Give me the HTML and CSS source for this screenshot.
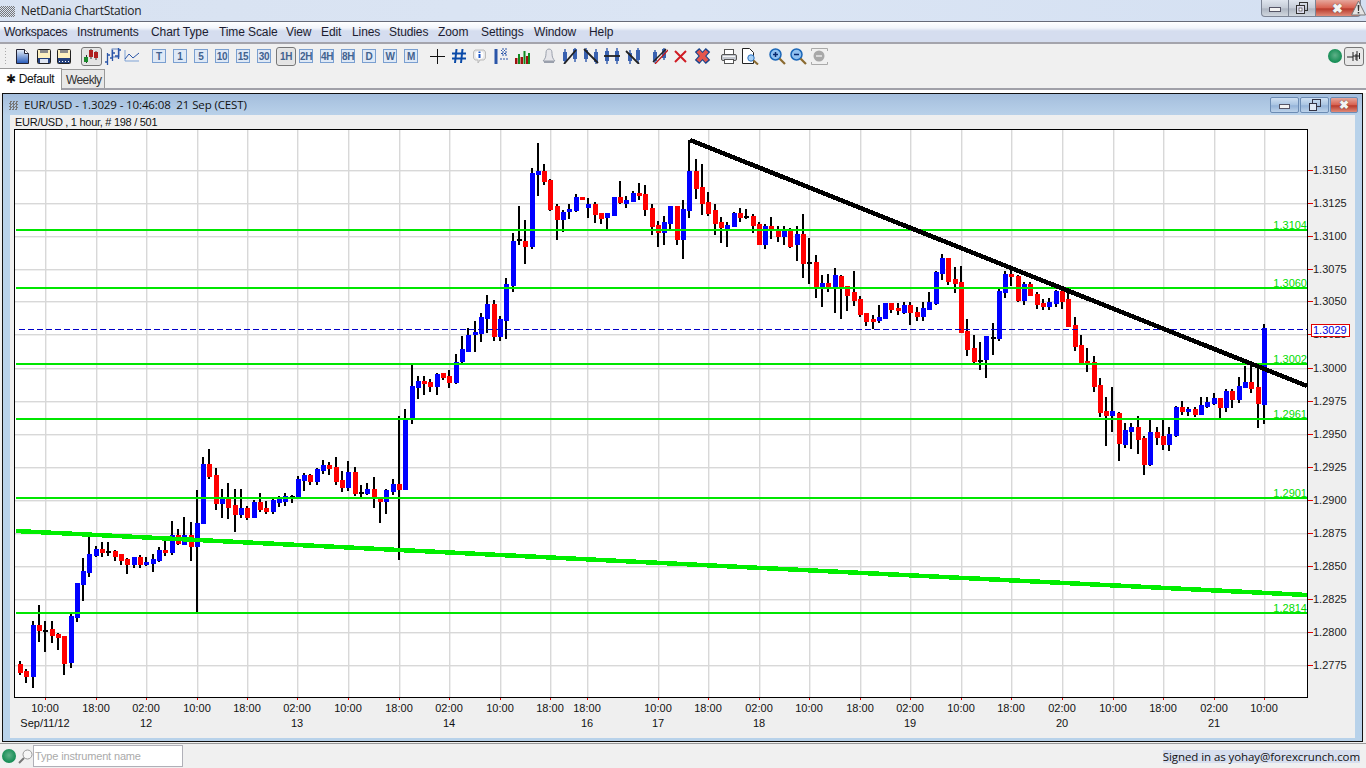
FILE: index.html
```html
<!DOCTYPE html>
<html lang="en">
<head>
<meta charset="utf-8">
<title>NetDania ChartStation</title>
<link rel="stylesheet" href="styles.css">
</head>
<body>
<div class="app">
  <header class="titlebar">
    <span class="dots"></span>
    <span class="apptitle">NetDania ChartStation</span>
    <div class="wincontrols">
      <span class="wc wc-min"><i></i></span>
      <span class="wc wc-max"><svg width="12" height="12" viewBox="0 0 12 12"><rect x="3.5" y=".5" width="8" height="8" fill="none" stroke="#333"/><rect x=".5" y="3.5" width="8" height="8" fill="#dde" stroke="#333"/><rect x="3" y="6" width="3" height="3" fill="#fff" stroke="#333" stroke-width=".6"/></svg></span>
      <span class="wc wc-close"><b>✖</b></span>
      <svg class="warn" width="15" height="16" viewBox="0 0 15 16"><path d="M7.5 1 14.5 15H.5z" fill="#e4e4e4" stroke="#777"/><path d="M6.6 5h1.8l-.4 6h-1zM6.7 12h1.6v1.6H6.7z" fill="#333"/></svg>
    </div>
  </header>
  <nav class="menubar">
    <span>Workspaces</span><span>Instruments</span><span>Chart Type</span><span>Time Scale</span><span>View</span><span>Edit</span><span>Lines</span><span>Studies</span><span>Zoom</span><span>Settings</span><span>Window</span><span>Help</span>
  </nav>
  <div class="toolbar">
    <span class="grip"></span>
    <svg class="ic i-new" width="13" height="15" viewBox="0 0 13 15"><defs><linearGradient id="gd" x1="0" y1="0" x2="0" y2="1"><stop offset="0" stop-color="#eaf2fb"/><stop offset="1" stop-color="#2458b8"/></linearGradient></defs><path d="M.5.5h8l4 4v10H.5z" fill="url(#gd)" stroke="#223"/><path d="M8.5.5v4h4" fill="#fff" stroke="#223"/></svg>
    <svg class="ic i-save" width="14" height="15" viewBox="0 0 14 15"><rect x=".5" y=".5" width="13" height="14" rx="1" fill="#fdf0c0" stroke="#222"/><rect x="3" y="1" width="8" height="3" fill="#8a8a8a"/><rect x="1" y="9" width="12" height="5" fill="#23407e"/><rect x="3" y="10" width="8" height="4" fill="#dfe6f2"/></svg>
    <svg class="ic i-saveas" width="14" height="15" viewBox="0 0 14 15"><rect x=".5" y=".5" width="13" height="14" rx="1" fill="#fdf0c0" stroke="#222"/><rect x="3" y="1" width="8" height="3" fill="#8a8a8a"/><rect x="1" y="9" width="12" height="5" fill="#23407e"/><path d="M2 12.5h1M5 12.5h1M8 12.5h1M11 12.5h1" stroke="#fff"/></svg>
    <span class="sel sel-chart"><svg width="18" height="15" viewBox="0 0 18 15"><path d="M3.5 6v8M8 0v10M13 2v9" stroke="#333"/><rect x="1" y="8" width="4" height="5" fill="#1a8a2a"/><rect x="6" y="1" width="4" height="7" fill="#b02020"/><rect x="11" y="3" width="4" height="6" fill="#b02020"/></svg></span>
    <svg class="ic i-bars" width="18" height="18" viewBox="0 0 18 18"><path d="M3.5 6v12M1 15h2.500M3.500 8H6M8.500 3v11M6 11h2.500M8.500 6H11M14.500 1v11M11 9h3.500M14.500 3H17" fill="none" stroke="#2a55a8" stroke-width="1.300"/><rect x="8" y="2" width="7" height="8" fill="none" stroke="#2a55a8" stroke-width=".7"/></svg>
    <svg class="ic i-line" width="16" height="14" viewBox="0 0 16 14"><path d="M1 12V1M1 12h14" stroke="#7fa3d6" fill="none"/><path d="M1 10 5 5l4 4 6-5" fill="none" stroke="#2a55a8"/></svg>
    <span class="tf t1">T</span><span class="tf">1</span><span class="tf">5</span><span class="tf">10</span><span class="tf">15</span><span class="tf">30</span><span class="sel sel-tf"><span class="tf tf-on">1H</span></span><span class="tf t2h">2H</span><span class="tf">4H</span><span class="tf">8H</span><span class="tf">D</span><span class="tf">W</span><span class="tf">M</span>
    <svg class="ic i-cross" width="15" height="15" viewBox="0 0 15 15"><path d="M7.500 0v15M0 7.500h15" stroke="#111"/></svg>
    <svg class="ic i-hash" width="16" height="16" viewBox="0 0 16 16"><path d="M5.500 1 4 15M11.500 1 10 15M1 5.500h14M1 10.500h14" stroke="#0a4aa8" stroke-width="2" fill="none"/></svg>
    <svg class="ic i-info" width="13" height="15" viewBox="0 0 13 15"><path d="M2 1h9l1.500 2v6L11 11H7l-2 3v-3H2L.5 9V3z" fill="#e8e8e8" stroke="#bbb"/><circle cx="6.500" cy="6" r="4" fill="#fff"/><path d="M5.500 2.500h2v1.500h-2zM5.500 5h2v4h-2z" fill="#1a55c8"/></svg>
    <svg class="ic i-level" width="16" height="16" viewBox="0 0 16 16"><path d="M3 1v15" stroke="#2a55a8" stroke-width="3"/><path d="M8 2.500h1m2 0h1M8 5.500h6M10 0v8M13 0v8M7 11h9" stroke="#2a55a8" stroke-dasharray="2 1" fill="none"/></svg>
    <svg class="ic i-vol" width="16" height="16" viewBox="0 0 16 16"><path d="M1 10h2.500v6H1z" fill="#a01010"/><path d="M4 6h2v10H4z" fill="#118a20"/><path d="M6.500 9H9v7H6.500z" fill="#a01010"/><path d="M9.500 3h2v13h-2z" fill="#118a20"/><path d="M12 8h2v8h-2z" fill="#a01010"/><path d="M14 5h2v11h-2z" fill="#118a20"/></svg>
    <svg class="ic i-bell" width="14" height="16" viewBox="0 0 14 16"><path d="M7 1C4.500 1 4 3 4 5.500 4 9 3 11 1 13h12c-2-2-3-4-3-7.500C10 3 9.500 1 7 1z" fill="#e6e6ea" stroke="#9aa0ac"/><path d="M2 14h10" stroke="#9aa0ac" stroke-width="2"/></svg>
    <svg class="ic i-tool" width="16" height="16" viewBox="0 0 16 16"><path d="M1 4h4v9H1zM11 1h4v10h-4z" fill="#3a62b0"/><path d="M3 1v14M13 0v14" stroke="#3a62b0" stroke-width="1.500"/><path d="M2 16 14 2" stroke="#222" stroke-width="1.800"/></svg>
    <svg class="ic i-tool2" width="16" height="16" viewBox="0 0 16 16"><path d="M1 2h4v9H1zM11 4h4v10h-4z" fill="#3a62b0"/><path d="M3 0v14M13 1v15" stroke="#3a62b0" stroke-width="1.500"/><path d="M1 1l14 14" stroke="#222" stroke-width="1.800"/></svg>
    <svg class="ic i-tool2" width="16" height="16" viewBox="0 0 16 16"><path d="M1 3h4v10H1zM11 3h4v10h-4z" fill="#3a62b0"/><path d="M3 0v16M13 0v16" stroke="#3a62b0" stroke-width="1.500"/><path d="M0 8h16" stroke="#222" stroke-width="1.800"/></svg>
    <svg class="ic i-tool2" width="16" height="16" viewBox="0 0 16 16"><path d="M3 5h4v8H3zM11 2h4v10h-4z" fill="#3a62b0"/><path d="M5 2v14M13 0v15" stroke="#3a62b0" stroke-width="1.500"/><path d="M1 3l13 13" stroke="#222" stroke-width="1.800"/></svg>
    <svg class="ic i-del1" width="16" height="16" viewBox="0 0 16 16"><path d="M1 4h4v9H1zM10 1h4v9h-4z" fill="#3a62b0"/><path d="M3 2v13M12 0v12" stroke="#3a62b0" stroke-width="1.500"/><path d="M1 14 14 1" stroke="#222" stroke-width="1.500"/><path d="M3 16 16 2" stroke="#c01818" stroke-width="1.300"/></svg>
    <svg class="ic i-x" width="13" height="13" viewBox="0 0 13 13"><path d="M1 1l11 11M12 1 1 12" stroke="#d01c24" stroke-width="2"/></svg>
    <svg class="ic i-xx" width="17" height="16" viewBox="0 0 17 16"><path d="M3 2l11 12M14 2 3 14" stroke="#17438c" stroke-width="6"/><path d="M4 3l9 10M13 3 4 13" stroke="#e4564c" stroke-width="4"/></svg>
    <svg class="ic i-print" width="16" height="15" viewBox="0 0 16 15"><rect x="3.500" y=".5" width="9" height="5" fill="#fff" stroke="#555"/><rect x=".5" y="5.500" width="15" height="6" rx="1.500" fill="#c4c8d0" stroke="#555"/><rect x="3.500" y="10.500" width="9" height="4" fill="#fff" stroke="#555"/><path d="M2 7.500h12" stroke="#f4f4f4"/></svg>
    <svg class="ic i-prev" width="17" height="17" viewBox="0 0 17 17"><path d="M.5.5h7l4 4v11H.5z" fill="#fff" stroke="#222"/><circle cx="9" cy="10" r="3.200" fill="#a8d0f4" stroke="#2a70c0"/><path d="M11.500 12.500 16 16.500" stroke="#8a6a30" stroke-width="2"/></svg>
    <svg class="ic i-zoom" width="17" height="17" viewBox="0 0 17 17"><circle cx="6.500" cy="6.500" r="5.500" fill="#8fc0f0" stroke="#1a66b8" stroke-width="1.500"/><path d="M4 6.500h5M6.500 4v5" stroke="#0a2a70" stroke-width="1.500"/><path d="M10.500 10.500 16 16" stroke="#8a6a30" stroke-width="2.200"/></svg>
    <svg class="ic i-zoom2" width="17" height="17" viewBox="0 0 17 17"><circle cx="6.500" cy="6.500" r="5.500" fill="#8fc0f0" stroke="#1a66b8" stroke-width="1.500"/><path d="M4 6.500h5" stroke="#0a2a70" stroke-width="1.500"/><path d="M10.500 10.500 16 16" stroke="#8a6a30" stroke-width="2.200"/></svg>
    <svg class="ic i-zoom2" width="17" height="17" viewBox="0 0 17 17"><path d="M.5 3V.5h16V3M.5 14v2.500h16V14" fill="none" stroke="#aaa"/><circle cx="8" cy="8" r="5.500" fill="#a8a8a8"/><path d="M5 8h6" stroke="#e8e8e8" stroke-width="1.500"/></svg>
    <span class="tb-right">
      <span class="led"></span>
      <span class="pinbtn"><svg width="14" height="12" viewBox="0 0 14 12"><path d="M0 7h6M6 2v9M10 1v10M12.500 3v6M6 6h7M9 4v6" stroke="#222" fill="none"/></svg></span>
    </span>
  </div>
  <div class="tabs">
    <span class="tab tab-on">✱ Default</span>
    <span class="tab">Weekly</span>
  </div>
  <main class="desk">
    <section class="chartwin">
      <div class="cw-title">
        <span class="dots dots-s"></span>
        <span class="cw-text">EUR/USD - 1.3029 - 10:46:08  21 Sep (CEST)</span>
        <div class="cw-ctrl">
          <span class="cb"><i></i></span>
          <span class="cb"><svg width="12" height="12" viewBox="0 0 12 12"><rect x="3.500" y=".5" width="8" height="7" fill="none" stroke="#334"/><rect x=".5" y="4.500" width="7" height="7" fill="#dfe8f4" stroke="#334"/></svg></span>
          <span class="cb cb-close"><b>✖</b></span>
        </div>
      </div>
      <div class="cw-body" id="chart"></div>
    </section>
  </main>
  <footer class="status">
    <span class="led led-s"></span>
    <svg class="mag" width="15" height="15" viewBox="0 0 15 15"><circle cx="9.500" cy="5.500" r="4.500" fill="#f6f6f6" stroke="#999"/><path d="M6 9 1 14" stroke="#777" stroke-width="2"/></svg>
    <span class="search">Type instrument name</span>
    <span class="signed">Signed in as yohay@forexcrunch.com</span>
  </footer>
</div>
<script src="chart.js"></script>
</body>
</html>
```
FILE: styles.css
```css
* { box-sizing: border-box; }
html, body { margin: 0; padding: 0; }
body { width: 1366px; height: 768px; overflow: hidden; background: #f0f0f0; font-family: "Liberation Sans", Arial, sans-serif; color: #111; }
.app { display: flex; flex-direction: column; width: 1366px; height: 768px; }

.titlebar { height: 21px; flex: none; display: flex; align-items: center; background: linear-gradient(90deg, #d8e2f1, #dbe5f4 50%, #d4e0f2); position: relative; }
.dots { width: 15px; height: 11px; margin-top: 2px; flex: none; background: repeating-conic-gradient(#777 0 25%, transparent 0 50%) 0 0 / 2px 2px; }
.apptitle { margin-left: 6px; font-family: "Open Sans", sans-serif; font-size: 12px; letter-spacing: -.26px; color: #222; }
.wincontrols { position: absolute; right: 0; top: 0; display: flex; padding-right: 5px; }
.wc { height: 17px; display: flex; align-items: center; justify-content: center; border: 1px solid #7c8494; border-top: 0; background: linear-gradient(#dfe5ee, #c4cbd6 50%, #aeb6c2 55%, #d0d6de); }
.wc-min { width: 28px; border-radius: 0 0 0 4px; }
.wc-min i { width: 12px; height: 5px; background: #f2f2f2; border: 1px solid #556; margin-top: 2px; }
.wc-max { width: 27px; border-left: 0; }
.wc-close { width: 45px; border-left: 0; border-radius: 0 0 4px 0; background: linear-gradient(#e6a79c, #d8604f 50%, #b83a2c 55%, #e08a78); color: #f4f4f4; justify-content: flex-start; padding-left: 16px; }
.wc-close b { font-size: 13px; line-height: 1; text-shadow: 0 0 1px #333; }
.warn { position: absolute; right: 0; top: 0; }

.menubar { height: 23px; flex: none; display: flex; align-items: center; padding-left: 4px; font-size: 12px; letter-spacing: -.1px; color: #1c1c30; border-top: 1px solid #666a78; border-bottom: 2px solid #a4a4ac; background: linear-gradient(#fff, #f2f5fb 30%, #d5ddef 45%, #d5ddef); }
.menubar span { flex: none; white-space: nowrap; }
.menubar span:nth-child(1) { width: 73px; letter-spacing: -.25px; }
.menubar span:nth-child(2) { width: 74px; }
.menubar span:nth-child(3) { width: 68px; }
.menubar span:nth-child(4) { width: 67px; }
.menubar span:nth-child(5) { width: 35px; }
.menubar span:nth-child(6) { width: 31px; }
.menubar span:nth-child(7) { width: 37px; }
.menubar span:nth-child(8) { width: 49px; }
.menubar span:nth-child(9) { width: 43px; }
.menubar span:nth-child(10) { width: 53px; }
.menubar span:nth-child(11) { width: 55px; }

.toolbar { height: 24px; flex: none; display: flex; align-items: center; position: relative; background: #f0f0f0; }
.grip { width: 3px; height: 18px; margin-left: 4px; background-image: radial-gradient(circle, #aaa 0 .7px, transparent .9px); background-size: 3px 3px; }
.ic { flex: none; }
.i-new { margin-left: 9px; }
.i-save { margin-left: 8px; }
.i-saveas { margin-left: 6px; }
.sel { display: flex; align-items: center; justify-content: center; border: 1px solid #777; border-radius: 3px; background: #e4e4e4; box-shadow: inset 0 0 1px #fff; }
.sel-chart { width: 21px; height: 19px; margin-left: 10px; }
.i-bars { margin-left: 2px; }
.i-line { margin-left: 2px; }
.tf { flex: none; width: 14px; height: 14px; display: flex; align-items: center; justify-content: center; margin-left: 7px; border: 1px solid #7a9fd0; background: #dfe9f6; color: #42628f; font-size: 10px; font-weight: bold; letter-spacing: -.3px; }
.t1 { margin-left: 12px; }
.sel-tf { width: 20px; height: 19px; margin-left: 5px; }
.tf-on { margin: 0; border: 0; background: transparent; width: 18px; }
.t2h { margin-left: 3px; }
.i-cross { margin-left: 12px; }
.i-hash { margin-left: 6px; }
.i-info { margin-left: 6px; }
.i-level { margin-left: 7px; }
.i-vol { margin-left: 5px; }
.i-bell { margin-left: 12px; }
.i-tool { margin-left: 6px; }
.i-tool2 { margin-left: 5px; }
.i-del1 { margin-left: 11px; }
.i-x { margin-left: 6px; }
.i-xx { margin-left: 7px; }
.i-print { margin-left: 10px; }
.i-prev { margin-left: 5px; }
.i-zoom { margin-left: 10px; }
.i-zoom2 { margin-left: 4px; }
.tb-right { margin-left: auto; display: flex; align-items: center; gap: 2px; margin-right: 2px; }
.led { display: block; width: 14px; height: 14px; border-radius: 50%; background: radial-gradient(circle at 50% 45%, #5fb088, #0e8a50 75%, #0b7a44); }
.pinbtn { width: 20px; height: 19px; display: flex; align-items: center; justify-content: center; border: 1px solid #777; border-radius: 3px; background: #e8e8e8; }

.tabs { height: 22px; flex: none; display: flex; align-items: flex-end; padding-top: 1px; border-bottom: 2px solid #a0a0a8; font-size: 12px; }
.tab { height: 19px; padding: 3px 4px 0; margin-left: 0; width: 43px; background: #e8e8e8; border: 1px solid #999; border-left: 0; border-bottom: 0; color: #333; letter-spacing: -.6px; white-space: nowrap; }
.tab-on { height: 22px; width: 62px; margin-bottom: -2px; padding: 3px 0 0 6px; background: #fff; color: #111; border-left: 0; letter-spacing: -.35px; }

.desk { height: 653px; flex: none; padding: 3px 3px 1px 2px; background: linear-gradient(#fff, #fff 3px, #f0f0f0 3px); }
.chartwin { display: flex; flex-direction: column; height: 100%; border: 1px solid #111; background: #b8d2ea; padding: 0 7px 3px; }
.cw-title { height: 21px; flex: none; margin: 0 -7px; padding-left: 6px; display: flex; align-items: center; background: linear-gradient(#a4bedd, #b9d1e9); }
.dots-s { width: 9px; height: 9px; margin-top: 1px; background-size: 3px 3px; }
.cw-text { margin-left: 6px; white-space: pre; font-family: "Open Sans", sans-serif; font-size: 11.500px; letter-spacing: -.12px; color: #111; }
.cw-ctrl { margin-left: auto; display: flex; gap: 1px; padding-right: 4px; }
.cb { width: 29px; height: 16px; display: flex; align-items: center; justify-content: center; border: 1px solid #6c8cb4; border-radius: 2px; background: linear-gradient(#cfe0f2, #a9c4e2 50%, #94b3d8 55%, #bdd3ea); }
.cb i { width: 11px; height: 5px; background: #f2f2f2; border: 1px solid #556; margin-top: 3px; }
.cb-close { width: 28px; background: linear-gradient(#e6a79c, #d8604f 50%, #b83a2c 55%, #e08a78); color: #f4f4f4; }
.cb-close b { font-size: 12px; line-height: 1; text-shadow: 0 0 1px #333; }
.cw-body { flex: 1; min-height: 0; background: #efefef; }
.cw-body svg { display: block; }
.sub { font-size: 11px; letter-spacing: -.28px; fill: #111; }
.ax { font-size: 11px; fill: #111; }
.axr { font-size: 11px; fill: #222; }
.lvl { font-size: 11px; fill: #00dd00; text-anchor: end; }
.mid { text-anchor: middle; }
.cur { font-size: 11px; fill: #0000e0; }

.status { height: 25px; flex: none; display: flex; align-items: center; padding-left: 2px; background: #f0f0f0; border-top: 1px solid #999; position: relative; }
.led-s { width: 14px; height: 14px; flex: none; }
.mag { margin-left: 2px; flex: none; }
.search { margin-left: 0; width: 150px; height: 22px; display: flex; align-items: center; padding-left: 1px; border: 1px solid #b0b0b8; background: #fff; color: #aaa; font-size: 11px; letter-spacing: -.15px; }
.signed { margin-left: auto; margin-right: 6px; height: 13px; line-height: 13px; background: #d8dfef; font-family: "Open Sans", sans-serif; font-size: 11.500px; letter-spacing: -.08px; color: #111; white-space: nowrap; }
```
FILE: chart.js
```js
// Each bar: wick top, wick bottom, body top, body bottom, colour (b blue, r red, d doji)
var bars = [
[661,675,664,673,'r'],[669,683,671,677,'r'],[621,688,625,677,'b'],[605,642,625,631,'r'],[621,652,630,632,'d'],[621,643,629,636,'r'],[633,650,634,638,'r'],[636,675,636,664,'r'],[614,668,616,663,'b'],[583,622,583,618,'b'],
[558,601,571,585,'b'],[537,577,554,573,'b'],[546,557,549,556,'b'],[542,557,549,553,'r'],[542,556,551,553,'d'],[550,561,551,557,'r'],[554,565,554,561,'r'],[558,574,559,565,'r'],[557,568,557,565,'b'],[555,568,557,565,'r'],
[557,566,562,565,'b'],[554,572,559,564,'b'],[547,562,550,561,'b'],[541,556,550,553,'r'],[521,555,535,553,'b'],[529,545,535,544,'r'],[517,545,535,545,'b'],[522,561,535,547,'r'],[490,612,523,547,'b'],[457,524,464,524,'b'],
[449,479,464,477,'r'],[468,510,475,504,'r'],[489,518,498,504,'b'],[483,519,498,508,'r'],[489,532,505,515,'r'],[489,518,508,515,'b'],[506,520,508,518,'r'],[500,518,502,518,'b'],[493,512,502,510,'r'],[501,514,508,512,'r'],
[499,514,500,512,'b'],[496,507,499,503,'b'],[493,506,496,502,'b'],[495,503,496,498,'d'],[476,497,479,497,'b'],[473,491,475,481,'b'],[474,485,475,482,'r'],[468,485,469,482,'b'],[460,474,465,471,'b'],[462,475,465,469,'r'],
[457,485,467,482,'r'],[471,492,480,488,'r'],[461,491,472,488,'b'],[467,496,472,494,'r'],[485,497,492,494,'d'],[483,495,489,494,'b'],[477,508,489,497,'r'],[498,523,499,502,'r'],[489,514,490,502,'b'],[479,495,484,492,'b'],
[416,560,484,490,'r'],[409,490,419,490,'b'],[365,424,386,419,'b'],[376,399,381,388,'b'],[376,395,381,384,'r'],[379,392,382,387,'r'],[373,395,374,387,'b'],[373,380,373,378,'r'],[370,388,376,383,'r'],[354,384,362,383,'b'],
[336,365,349,362,'b'],[328,352,335,352,'b'],[321,352,332,335,'b'],[313,342,317,334,'b'],[295,333,304,319,'b'],[300,341,304,337,'r'],[316,341,319,337,'b'],[278,339,284,321,'b'],[233,292,241,286,'b'],[206,245,239,241,'d'],
[220,264,241,247,'r'],[168,249,173,247,'b'],[143,196,171,175,'b'],[164,185,171,182,'r'],[179,211,180,210,'r'],[204,240,206,220,'r'],[210,232,212,220,'b'],[204,219,209,212,'b'],[194,212,197,211,'b'],[197,200,197,200,'r'],
[198,218,204,208,'b'],[202,223,204,215,'r'],[213,224,213,219,'r'],[213,229,213,218,'b'],[197,216,197,216,'b'],[181,204,197,203,'r'],[196,208,200,204,'b'],[191,202,193,202,'b'],[183,200,193,196,'r'],[185,216,194,210,'r'],
[204,235,208,227,'r'],[221,247,225,233,'r'],[216,245,222,233,'b'],[206,230,206,224,'b'],[206,245,206,240,'r'],[200,259,209,240,'b'],[140,218,171,211,'b'],[159,199,171,189,'r'],[164,215,187,204,'r'],[192,216,202,214,'r'],
[204,235,210,224,'r'],[217,243,222,228,'r'],[222,247,225,229,'b'],[212,227,213,227,'b'],[208,222,213,218,'r'],[209,219,216,218,'d'],[214,233,216,226,'r'],[222,245,224,245,'r'],[224,249,226,245,'b'],[217,239,226,231,'r'],
[226,242,231,237,'r'],[226,245,231,237,'b'],[228,248,231,247,'r'],[226,261,234,245,'b'],[214,278,234,264,'r'],[238,284,262,264,'d'],[255,298,262,287,'r'],[275,307,283,287,'b'],[274,292,283,287,'r'],[268,313,275,287,'b'],
[275,319,276,287,'r'],[286,311,286,296,'r'],[271,306,292,301,'r'],[296,317,299,315,'r'],[313,326,313,322,'r'],[315,329,319,322,'r'],[305,323,317,321,'b'],[303,319,303,319,'b'],[303,313,303,310,'r'],[303,315,308,311,'r'],
[302,314,305,313,'b'],[302,325,305,313,'r'],[307,321,312,317,'r'],[302,321,308,317,'b'],[292,310,302,310,'b'],[271,305,272,304,'b'],[254,280,258,274,'b'],[258,285,258,282,'r'],[267,293,279,284,'r'],[266,333,282,333,'r'],
[319,356,331,350,'r'],[335,363,348,362,'r'],[342,370,360,362,'d'],[336,378,336,360,'b'],[323,355,337,339,'d'],[289,341,291,339,'b'],[271,298,274,293,'b'],[270,286,274,277,'r'],[275,302,276,301,'r'],[282,305,284,301,'b'],
[282,296,284,296,'r'],[292,309,294,305,'r'],[299,310,303,307,'r'],[298,310,302,307,'b'],[290,307,291,304,'b'],[288,309,291,302,'r'],[289,327,299,327,'r'],[317,351,325,347,'r'],[335,363,345,363,'r'],[348,372,361,363,'r'],
[356,392,362,387,'r'],[378,417,385,413,'r'],[397,446,411,416,'r'],[387,432,411,416,'b'],[412,461,413,444,'r'],[423,448,430,445,'b'],[423,449,427,432,'b'],[416,454,427,440,'r'],[436,475,438,465,'r'],[420,466,432,465,'b'],
[427,445,432,438,'r'],[420,450,436,445,'r'],[427,451,434,445,'b'],[406,437,407,436,'b'],[401,415,407,412,'r'],[407,416,409,412,'b'],[407,417,409,415,'r'],[397,415,405,415,'b'],[397,408,402,407,'b'],[393,405,398,404,'b'],
[398,418,398,408,'r'],[389,412,391,408,'b'],[389,408,391,400,'r'],[377,403,386,400,'b'],[366,388,382,388,'b'],[363,393,382,389,'r'],[365,428,387,404,'r'],[324,424,328,405,'b']
];
var ys = [[1.3150,170],[1.3125,203],[1.3100,236],[1.3075,269],[1.3050,301],[1.3025,334],[1.3000,368],[1.2975,401],[1.2950,434],[1.2925,467],[1.2900,500],[1.2875,533],[1.2850,566],[1.2825,599],[1.2800,632],[1.2775,665]];
var times = [[45,'10:00'],[96,'18:00'],[146,'02:00'],[197,'10:00'],[247,'18:00'],[297,'02:00'],[348,'10:00'],[399,'18:00'],[449,'02:00'],[500,'10:00'],[550,'18:00'],[587,'18:00'],[658,'10:00'],[708,'18:00'],[759,'02:00'],[809,'10:00'],[860,'18:00'],[910,'02:00'],[961,'10:00'],[1011,'18:00'],[1062,'02:00'],[1113,'10:00'],[1163,'18:00'],[1214,'02:00'],[1264,'10:00']];
var dates = [[45,'Sep/11/12'],[146,'12'],[297,'13'],[449,'14'],[587,'16'],[658,'17'],[759,'18'],[910,'19'],[1062,'20'],[1214,'21']];
var levels = [[230,'1.3104'],[288,'1.3060'],[364,'1.3002'],[419,'1.2961'],[498,'1.2901'],[613,'1.2814']];
var L = 15, R = 1307, T = 130, B = 697;
var s = '<svg width="1345" height="623" viewBox="10 115 1345 623" xmlns="http://www.w3.org/2000/svg">';
s += '<text class="sub" x="15" y="126">EUR/USD , 1 hour, # 198 / 501</text>';
s += '<rect x="' + (L - .5) + '" y="' + (T - .5) + '" width="' + (R - L + 1) + '" height="' + (B - T + 1) + '" fill="#fff" stroke="#000"/>';
var g = '';
ys.forEach(function (y) {
  g += '<rect x="' + (L) + '" y="' + y[1] + '" width="' + (R - L) + '" height="1.4" fill="#d8d8d8"/>';
  s += '<rect x="' + (R + 1) + '" y="' + y[1] + '" width="5" height="1" fill="#e00000"/>';
  s += '<text class="axr" x="1313" y="' + (y[1] + 4) + '">' + y[0].toFixed(4) + '</text>';
});
times.forEach(function (t) {
  g += '<rect x="' + t[0] + '" y="' + T + '" width="1.4" height="' + (B - T) + '" fill="#d8d8d8"/>';
  s += '<rect x="' + t[0] + '" y="' + (B + 1) + '" width="1" height="2" fill="#e00000"/>';
  s += '<text class="ax mid" x="' + t[0] + '" y="712">' + t[1] + '</text>';
});
dates.forEach(function (d) {
  s += '<text class="ax mid" x="' + d[0] + '" y="727">' + d[1] + '</text>';
});
s += g;
var wicks = '', blue = '', red = '', doji = '';
bars.forEach(function (b, i) {
  var c = Math.round(20 + 6.315 * i);
  wicks += 'M' + (c - 1) + ' ' + b[0] + 'h2V' + b[1] + 'h-2z';
  var r = 'M' + (c - 2) + ' ' + b[2] + 'h5V' + b[3] + 'h-5z';
  if (b[4] === 'b') blue += r; else if (b[4] === 'r') red += r; else doji += r;
});
s += '<path d="' + wicks + doji + '" fill="#000" shape-rendering="crispEdges"/>';
s += '<path d="' + blue + '" fill="#0000ff" shape-rendering="crispEdges"/>';
s += '<path d="' + red + '" fill="#ff0000" shape-rendering="crispEdges"/>';
levels.forEach(function (l) {
  s += '<rect x="' + (L + 1) + '" y="' + (l[0] - 1) + '" width="' + (R - L - 1) + '" height="2" fill="#00e600"/>';
  s += '<text class="lvl" x="1307" y="' + (l[0] - 1) + '">' + l[1] + '</text>';
});
s += '<line x1="16" y1="531" x2="1307" y2="595" stroke="#00ee00" stroke-width="4.500" shape-rendering="crispEdges"/>';
s += '<line x1="19" y1="329.500" x2="1307" y2="329.500" stroke="#0000c8" stroke-dasharray="6 3" shape-rendering="crispEdges"/>';
s += '<line x1="690" y1="140" x2="1307" y2="386" stroke="#000" stroke-width="4.500" shape-rendering="crispEdges"/>';
s += '<rect x="1311.500" y="324.500" width="38" height="12" fill="#fff" stroke="#e00000"/>';
s += '<text class="cur" x="1313" y="334">1.3029</text>';
s += '</svg>';
document.getElementById('chart').innerHTML = s;
```
